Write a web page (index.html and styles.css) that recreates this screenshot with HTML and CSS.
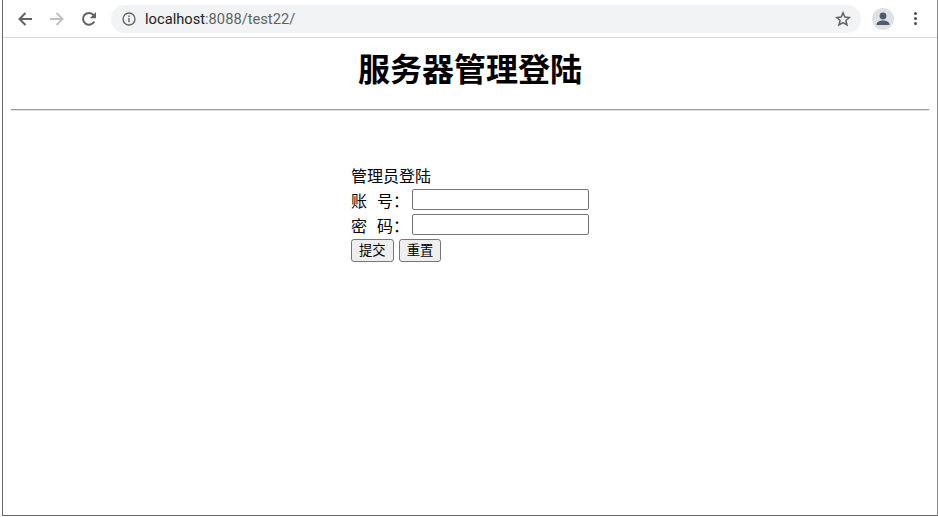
FILE: index.html
```html
<!DOCTYPE html>
<html lang="zh">
<head>
<meta charset="utf-8">
<title>服务器管理登陆</title>
<link rel="stylesheet" href="styles.css">
</head>
<body>
<div class="window">
  <div class="toolbar">
    <svg class="nav" viewBox="0 0 16 16"><path d="M15 8H2.500M8.500 2 2.500 8l6 6" fill="none" stroke="#5f6368" stroke-width="2"/></svg>
    <svg class="nav" viewBox="0 0 16 16"><path d="M1 8h12.500M7.500 2l6 6-6 6" fill="none" stroke="#bdc1c6" stroke-width="2"/></svg>
    <svg class="nav" viewBox="0 0 16 16"><path d="M13.200 10.500A5.900 5.900 0 1 1 12.600 4.200" fill="none" stroke="#5f6368" stroke-width="2"/><path d="M15 1v6.200H8.800z" fill="#5f6368"/></svg>
    <div class="omnibox">
      <svg class="info" viewBox="0 0 14 14"><circle cx="7" cy="7" r="6" fill="none" stroke="#5f6368" stroke-width="1.300"/><path d="M7 6v4.200M7 3.600v1.300" stroke="#5f6368" stroke-width="1.400"/></svg>
      <span class="url"><span class="host">localhost</span>:8088/test22/</span>
      <svg class="star" viewBox="0 0 16 16"><path d="M8 1.800l1.800 4.300 4.600.4-3.500 3 1.100 4.500L8 11.600 4 14l1.100-4.500-3.500-3 4.600-.4z" fill="none" stroke="#5f6368" stroke-width="1.500"/></svg>
    </div>
    <div class="avatar"><svg viewBox="0 0 22 22"><circle cx="11" cy="8" r="3.400" fill="#4d5a70"/><path d="M4.500 17c0-3.200 3.600-4.400 6.500-4.400s6.500 1.200 6.500 4.400z" fill="#4d5a70"/></svg></div>
    <div class="menu"><i></i><i></i><i></i></div>
  </div>
  <main class="page">
    <h1 class="title">服务器管理登陆</h1>
    <hr class="rule">
    <form class="login">
      <div class="heading">管理员登陆</div>
      <label class="row"><span class="label">账<span class="gap"></span>号：</span><input class="field" type="text"></label>
      <label class="row"><span class="label">密<span class="gap"></span>码：</span><input class="field" type="password"></label>
      <div class="actions"><button class="btn" type="button">提交</button><button class="btn" type="button">重置</button></div>
    </form>
  </main>
</div>
</body>
</html>
```
FILE: styles.css
```css
* { box-sizing: border-box; }
html, body { margin: 0; height: 517px; overflow: hidden; background: #fff; }
body { padding: 0 0 0 2px; font-family: "Liberation Sans", "Noto Sans CJK SC", sans-serif; color: #000; }
.window { height: 516px; border-left: 1px solid #666; border-bottom: 1px solid #666; border-right: 1px solid #8a8a8a; display: flex; flex-direction: column; }
.toolbar { height: 38px; flex: none; display: flex; align-items: center; padding: 0 0 0 14px; border-bottom: 1px solid #d9dadc; }
.nav { width: 16px; height: 16px; margin-right: 16px; flex: none; }
.omnibox { width: 750px; height: 28px; margin-left: -2px; background: #f1f3f4; border-radius: 14px; display: flex; align-items: center; padding: 0 10px 0 11px; }
.info { width: 14px; height: 14px; flex: none; }
.url { margin-left: 9px; font-family: "Roboto", sans-serif; font-size: 14.700px; color: #5f6368; flex: 1; }
.host { color: #202124; }
.star { width: 16px; height: 16px; flex: none; }
.avatar { width: 22px; height: 22px; border-radius: 50%; background: #dfe1e5; margin-left: 11px; flex: none; }
.avatar svg { display: block; width: 22px; height: 22px; }
.menu { margin-left: 20px; display: flex; flex-direction: column; gap: 2px; }
.menu i { display: block; width: 3px; height: 3px; background: #4a4d52; border-radius: 50%; }
.page { flex: 1; padding: 0 8px; }
.title { margin: 14px 0 20px; font-size: 32px; line-height: 37px; font-weight: 700; text-align: center; }
.rule { margin: 0; border: 0; border-top: 1px solid #9a9a9a; border-bottom: 1px solid #e4e4e4; }
.login { width: 238px; margin: 55px auto 0; font-size: 16px; line-height: 22px; }
.heading { height: 22px; margin-bottom: 1px; }
.row { display: flex; align-items: center; justify-content: space-between; height: 21px; margin-bottom: 4px; }
.label { display: flex; align-items: center; margin-top: 4px; }
.gap { width: 10px; }
.field { width: 177px; height: 21px; padding: 1px 2px; border: 1px solid #767676; border-radius: 2px; background: #fff; }
.actions { display: flex; gap: 5px; }
.btn { height: 23px; padding: 1px 7px; font-family: "Liberation Sans", "Noto Sans CJK SC", sans-serif; font-size: 13.330px; line-height: 18px; border: 1px solid #767676; border-radius: 3px; background: #efefef; color: #000; }
```
